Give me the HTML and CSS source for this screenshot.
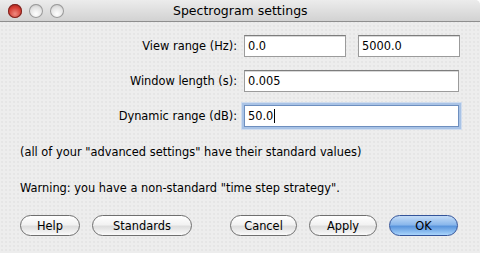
FILE: index.html
```html
<!DOCTYPE html>
<html lang="en">
<head>
  <meta charset="UTF-8">
  <title>Spectrogram settings</title>
  <link rel="stylesheet" href="styles.css">
</head>
<body>
  <div class="window">
    <div class="titlebar">
      <div class="lights">
        <span class="light red"></span>
        <span class="light gray"></span>
        <span class="light gray"></span>
      </div>
      <div class="title">Spectrogram settings</div>
    </div>
    <div class="content">
      <div class="form">
        <div class="row">
          <label class="label">View range (Hz):</label>
          <div class="field half">0.0</div>
          <div class="field half">5000.0</div>
        </div>
        <div class="row">
          <label class="label">Window length (s):</label>
          <div class="field wide">0.005</div>
        </div>
        <div class="row">
          <label class="label">Dynamic range (dB):</label>
          <div class="field wide focused">50.0<span class="caret"></span></div>
        </div>
      </div>
      <p class="note first">(all of your "advanced settings" have their standard values)</p>
      <p class="note">Warning: you have a non-standard "time step strategy".</p>
      <div class="buttons">
        <button class="btn help">Help</button>
        <button class="btn standards">Standards</button>
        <div class="spacer"></div>
        <button class="btn cancel">Cancel</button>
        <button class="btn apply">Apply</button>
        <button class="btn ok">OK</button>
      </div>
    </div>
  </div>
</body>
</html>
```

FILE: styles.css
```css
body {
  margin: 0;
  font-family: "DejaVu Sans", sans-serif;
  font-size: 11.4px;
  color: #000;
  background: #fff;
}

.window {
  width: 480px;
  height: 253px;
  background-color: #ededed;
  background-image: radial-gradient(#dcdcdc 0.6px, transparent 0.8px);
  background-size: 4px 4px;
  border-top-right-radius: 5px;
  overflow: hidden;
}

.titlebar {
  height: 21px;
  display: flex;
  align-items: center;
  background: linear-gradient(#ececec, #d2d2d2);
  border-bottom: 1px solid #8f8f8f;
  position: relative;
}

.lights {
  display: flex;
  gap: 7px;
  padding-left: 8px;
}

.light {
  width: 14px;
  height: 14px;
  border-radius: 50%;
}

.light.red {
  background: radial-gradient(circle at 50% 70%, #f08a80 0%, #d33a30 55%, #8e1a14 100%);
  box-shadow: inset 0 0 0 1px #7a2520;
}

.light.gray {
  background: radial-gradient(circle at 50% 70%, #ffffff 0%, #e2e2e2 55%, #b3b3b3 100%);
  box-shadow: inset 0 0 0 1px #9a9a9a;
}

.title {
  position: absolute;
  left: 173px;
  top: 3px;
  font-size: 12.5px;
  color: #000;
}

.content {
  padding: 13px 20px 0 20px;
}

.form {
  display: flex;
  flex-direction: column;
  gap: 13px;
}

.row {
  display: flex;
  align-items: center;
  height: 22px;
}

.label {
  width: 224px;
  text-align: right;
  padding-right: 7px;
  box-sizing: border-box;
}

.field {
  height: 22px;
  box-sizing: border-box;
  background: #fff;
  border: 1px solid #9b9b9b;
  border-top-color: #7d7d7d;
  box-shadow: inset 0 1px 0 #d8d8d8;
  padding: 3px 0 0 3px;
}

.field.half {
  width: 102px;
}

.field.half + .field.half {
  margin-left: 12px;
}

.field.wide {
  width: 215px;
}

.field.focused {
  border-color: #6e8fbf;
  box-shadow: 0 0 0 2px #a9c3e6, 0 0 0 3px #cfdcee;
}

.caret {
  display: inline-block;
  width: 1px;
  height: 14px;
  background: #000;
  vertical-align: -3px;
  margin-left: 1px;
}

.note {
  margin: 0;
  height: 36px;
  line-height: 16px;
}

.note.first {
  margin-top: 17px;
}

.buttons {
  display: flex;
  align-items: center;
  margin-top: -1px;
}

.btn {
  height: 21px;
  border-radius: 11px;
  border: 1px solid #6f6f6f;
  background: linear-gradient(#ffffff 0%, #f2f2f2 45%, #dedede 55%, #fafafa 100%);
  font-family: "DejaVu Sans", sans-serif;
  font-size: 11.4px;
  color: #000;
  padding: 0;
  margin-right: 12px;
}

.btn.help { width: 60px; }
.btn.standards { width: 100px; }
.btn.cancel { width: 67px; }
.btn.apply { width: 68px; }
.btn.ok { width: 69px; margin-right: 0; }

.spacer {
  width: 26px;
}

.btn.ok {
  border-color: #33549a;
  background: linear-gradient(#c4dcf7 0%, #8bb8ec 45%, #5b96dd 55%, #a9d4fb 100%);
}
```
